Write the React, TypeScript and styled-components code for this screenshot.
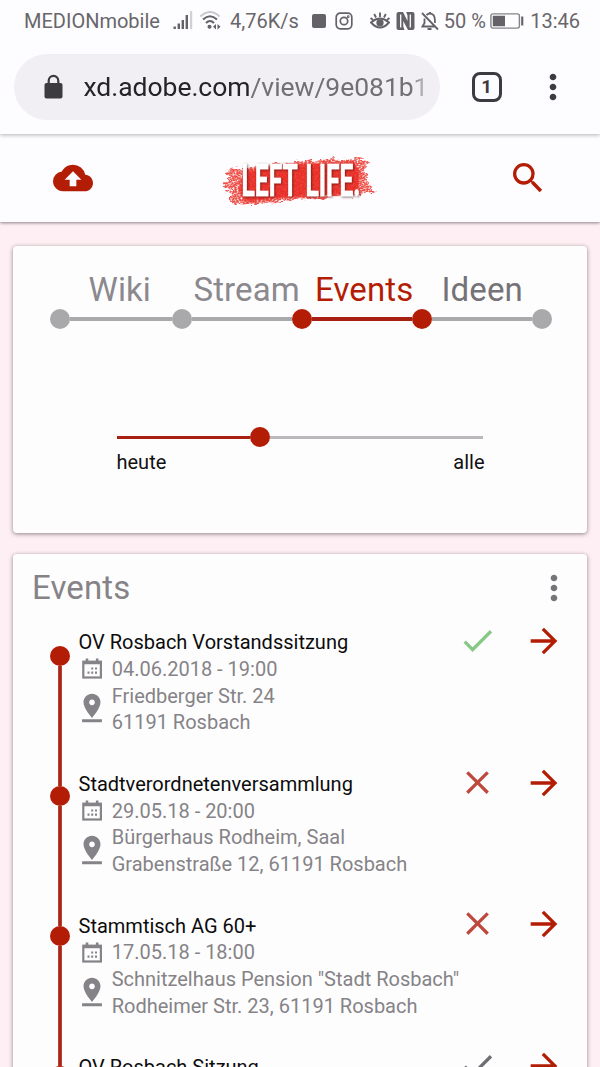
import React from "react";
import styled, { createGlobalStyle } from "styled-components";
import {
  MdArrowForward,
  MdCheck,
  MdClose,
  MdCloudUpload,
  MdMoreVert,
  MdPinDrop,
  MdSearch,
} from "react-icons/md";

const RED = "#b41d05";
const GREY = "#a9a8aa";

const GlobalStyle = createGlobalStyle`
  * { box-sizing: border-box; }
  html, body { margin: 0; padding: 0; overflow: hidden; }
  body { font-family: Roboto, sans-serif; background: #fdeff3; }
  svg { display: block; flex: none; }
`;

const Screen = styled.div`
  width: 600px;
  height: 1067px;
  overflow: hidden;
  display: flex;
  flex-direction: column;
  background: #fdeff3;
`;

/* ---------- system status bar ---------- */

const StatusBar = styled.div`
  flex: none;
  height: 41px;
  display: flex;
  align-items: center;
  padding-left: 24px;
  background: #fdfcfe;
  color: #68666a;
  z-index: 3;
`;

const StatusText = styled.span<{ $width: number }>`
  flex: none;
  width: ${(p) => p.$width}px;
  font-size: 20px;
  line-height: 24px;
  white-space: nowrap;
`;

const StatusIcon = styled.span<{ $width: number; $gap: number }>`
  flex: none;
  width: ${(p) => p.$width}px;
  margin-right: ${(p) => p.$gap}px;
`;

/* ---------- browser toolbar ---------- */

const BrowserBar = styled.div`
  flex: none;
  height: 93px;
  display: flex;
  align-items: center;
  padding: 0 0 2px 14px;
  background: #fdfcfe;
  box-shadow: 0 1px 4px rgba(0, 0, 0, 0.3);
  z-index: 2;
  color: #3c3b3f;
`;

const AddressPill = styled.div`
  width: 426px;
  height: 66px;
  border-radius: 33px;
  background: #f1eff4;
  display: flex;
  align-items: center;
  padding: 0 16px 0 30px;
`;

const Url = styled.div`
  flex: 1;
  margin-left: 20.5px;
  padding-top: 1px;
  overflow: hidden;
  white-space: nowrap;
  font-size: 26.5px;
  line-height: 34px;
  letter-spacing: -0.04px;
  color: #717074;
  mask-image: linear-gradient(to right, #000 96%, rgba(0, 0, 0, 0.4));
`;

const Domain = styled.span`
  color: #242327;
`;

const TabCount = styled.div`
  width: 30px;
  height: 30px;
  margin: 0 31.5px 0 31.5px;
  border: 3px solid #3c3b3f;
  border-radius: 8px;
  display: flex;
  align-items: center;
  justify-content: center;
  font-size: 18.5px;
  font-weight: 700;
  line-height: 24px;
`;

/* ---------- app header ---------- */

const AppHeader = styled.header`
  flex: none;
  height: 88px;
  display: flex;
  align-items: center;
  justify-content: space-between;
  padding: 0 52px 1px 53px;
  background: #fdfcfe;
  box-shadow: 0 1px 3px rgba(40, 20, 30, 0.5);
  z-index: 1;
  color: ${RED};
`;

const Main = styled.main`
  display: flex;
  flex-direction: column;
  gap: 21.5px;
  padding: 23.5px 13px 0;
`;

const Card = styled.section<{ $height: number }>`
  flex: none;
  height: ${(p) => p.$height}px;
  border-radius: 4px;
  background: #fefdfe;
  box-shadow: 0 1px 4px rgba(40, 20, 30, 0.5);
`;

/* ---------- category steps ---------- */

const StepLabels = styled.nav`
  display: flex;
  padding: 24px 0 0 75.5px;
  height: 63.5px;
`;

const StepLabel = styled.span<{ $width: number; $color: string }>`
  flex: none;
  width: ${(p) => p.$width}px;
  font-size: 33px;
  line-height: 40px;
  letter-spacing: 0.1px;
  white-space: nowrap;
  color: ${(p) => p.$color};
`;

const StepTrack = styled.div`
  display: flex;
  align-items: center;
  height: 20px;
  padding-left: 37px;
`;

const Dot = styled.span<{ $color: string }>`
  flex: none;
  width: 20px;
  height: 20px;
  border-radius: 50%;
  background: ${(p) => p.$color};
`;

const Segment = styled.span<{ $length: number; $color: string }>`
  flex: none;
  width: ${(p) => p.$length}px;
  height: 3.5px;
  background: ${(p) => p.$color};
`;

/* ---------- time range ---------- */

const Range = styled.div`
  width: 368px;
  margin: 98.3px 0 0 103.5px;
`;

const RangeTrack = styled.div`
  display: flex;
  align-items: center;
`;

const RangeLabels = styled.div`
  display: flex;
  justify-content: space-between;
  margin-top: 2.5px;
  font-size: 20px;
  line-height: 24px;
  color: #111;
`;

/* ---------- event list ---------- */

const ListHeader = styled.div`
  display: flex;
  align-items: center;
  justify-content: space-between;
  height: 67.2px;
  padding: 0 13.5px 0 19px;
  color: #757478;
`;

const ListTitle = styled.h2`
  margin: 0;
  padding-top: 1px;
  font-size: 33px;
  font-weight: 400;
  line-height: 40px;
  letter-spacing: 0.1px;
  color: #858387;
`;

const Timeline = styled.div`
  display: flex;
`;

const Rail = styled.div`
  flex: none;
  width: 28.5px;
  margin-left: 37px;
  padding-top: 24.5px;
  display: flex;
  flex-direction: column;
`;

const RailLine = styled.span`
  width: 4px;
  height: 120px;
  margin-left: 8px;
  background: linear-gradient(to right, #cf4536, #8f2216 50%, #cf4536);
`;

const Events = styled.ul`
  flex: 1;
  margin: 0;
  padding: 8.1px 24px 0 0;
  list-style: none;
`;

const EventRow = styled.li`
  display: flex;
  height: 141.7px;
`;

const EventText = styled.div`
  flex: 1;
  font-size: 20px;
  line-height: 26.7px;
  white-space: nowrap;
`;

const EventName = styled.div`
  color: #0c0c0d;
`;

const Meta = styled.div`
  display: flex;
  align-items: center;
  color: #858387;
`;

const MetaIcon = styled.span`
  flex: none;
  width: 33.2px;
`;

const PinIcon = styled(MdPinDrop)`
  margin: -2px 0 0 -4px;
`;

const Actions = styled.div`
  display: flex;
  gap: 27px;
  margin-top: -8.3px;
`;

const Action = styled.span<{ $color: string }>`
  width: 40px;
  height: 40px;
  margin-left: -1px;
  color: ${(p) => p.$color};
`;

const LockIcon = () => (
  <svg width="19" height="26" viewBox="0 0 19 26">
    <path d="M4.7 10V6.7a4.8 4.8 0 0 1 9.6 0V10" fill="none" stroke="#3c3b3f" strokeWidth="2.2" />
    <rect x="0.5" y="9" width="18" height="15.5" rx="2" fill="#3c3b3f" />
  </svg>
);

const CalendarIcon = () => (
  <svg width="33" height="22" viewBox="-3 0.5 33 22" fill="none">
    <rect x="1.3" y="4.2" width="17.6" height="15.8" stroke="#858387" strokeWidth="2.2" />
    <path d="M1 5.5H19.2M5 1v4M15.2 1v4" stroke="#858387" strokeWidth="2.6" />
    <path
      d="M9.2 11h2M13 11h2M5.5 15.2h2M9.2 15.2h2M13 15.2h2"
      stroke="#858387"
      strokeWidth="2.2"
    />
  </svg>
);

const Logo = () => (
  <svg width="160" height="60" viewBox="0 0 160 60">
    <defs>
      <filter id="brush" x="-5%" y="-10%" width="110%" height="120%">
        <feTurbulence type="fractalNoise" baseFrequency="0.12 0.3" numOctaves="3" seed="4" result="n" />
        <feDisplacementMap
          in="SourceGraphic"
          in2="n"
          scale="9"
          xChannelSelector="R"
          yChannelSelector="G"
          result="rough"
        />
        <feTurbulence type="fractalNoise" baseFrequency="0.5 0.6" numOctaves="2" seed="9" />
        <feColorMatrix values="0 0 0 0 0  0 0 0 0 0  0 0 0 0 0  -3 0 0 0 2.3" result="grain" />
        <feComposite in="rough" in2="grain" operator="in" />
        <feGaussianBlur stdDeviation="0.6" />
      </filter>
      <filter id="soft" x="-5%" y="-10%" width="110%" height="120%">
        <feGaussianBlur stdDeviation="1.2" />
      </filter>
      <filter id="letters" x="-5%" y="-10%" width="115%" height="130%">
        <feDropShadow dx="0.8" dy="0.8" stdDeviation="0.8" floodColor="#3a0503" floodOpacity="0.7" />
      </filter>
    </defs>
    <g filter="url(#brush)">
      <path
        d="M5 23 21 20 60 15 100 12 139 10 147 14 143 22 147 30 144 34 155 43 137 47 100 50 60 53 32 57 13 56 7 51 11 45 1 39 8 33Z"
        fill="#ee5149"
      />
    </g>
    <path
      d="M23 23 70 16 133 14 139 25 137 46 60 50 25 54 18 42Z"
      fill="#e92a22"
      opacity="0.85"
      filter="url(#soft)"
    />
    <text
      x="20.5"
      y="48"
      textLength="119"
      lengthAdjust="spacingAndGlyphs"
      filter="url(#letters)"
      fill="#fff"
      stroke="#fff"
      strokeWidth="0.4"
      fontFamily="Roboto, sans-serif"
      fontWeight="700"
      fontSize="45"
      wordSpacing="4"
    >
      LEFT LIFE.
    </text>
  </svg>
);

const SignalIcon = () => (
  <svg width="20" height="20" viewBox="0 0 20 20">
    <path d="M.5 15.5h2.4V18H.5zM4.6 12.5H7V18H4.6zM8.6 9H11v9H8.6zM12.6 4H15v14h-2.4z" fill="#646266" />
    <path d="M17 0h2.2v18H17z" fill="#d2d0d4" />
  </svg>
);

const WifiIcon = () => (
  <svg width="23" height="20" viewBox="1 0.5 23 20" fill="none">
    <path d="M1.5 6Q11 -3 20.5 6" stroke="#c9c7cb" strokeWidth="2" />
    <path d="M4 9Q11 2.5 18 9M7 12.5Q11 8.5 15 12.5" stroke="#646266" strokeWidth="2" />
    <circle cx="10.5" cy="16.3" r="2" fill="#646266" />
    <path d="M17 13.5V19l-3-2.7zM18.5 13.5V19l3-2.7z" fill="#646266" />
  </svg>
);

const EyeIcon = () => (
  <svg width="20" height="20" viewBox="0 0 20 20" fill="none" stroke="#646266" strokeWidth="1.9">
    <path d="M1 11.5Q10 3.5 19 11.5Q10 21.5 1 11.5ZM10 1.5V6M4.2 3 6 6.5M15.8 3 14 6.5M.5 7 3 9M19.5 7 17 9" />
    <circle cx="10" cy="11.8" r="2.7" fill="#646266" />
  </svg>
);

const NfcIcon = () => (
  <svg width="19" height="20" viewBox="0 0 19 20">
    <path
      d="M2.5 1H7l4.5 9V4.5L10.2 1H16.5q2 0 2 2v14q0 2-2 2H12L7.3 10v5.5L8.5 19H2.5q-2 0-2-2V3q0-2 2-2z"
      fill="#646266"
    />
    <path d="M4.7 3.5v13M14.3 3.5v13" stroke="#fdfcfe" strokeWidth="1.3" />
  </svg>
);

const BellOffIcon = () => (
  <svg width="18" height="20" viewBox="0 0 18 20" fill="none" stroke="#646266" strokeWidth="1.8">
    <path d="M3.5 7.5V12L1.5 15.5H14M5.5 4Q9 .8 12.5 4.2Q14 6 14 12M1 2 17 18.5M6.5 18h4M9 1v2" />
  </svg>
);

const InstagramIcon = () => (
  <svg width="18" height="18" viewBox="0 0 18 18" fill="none" stroke="#646266" strokeWidth="1.7">
    <rect x="1.2" y="1.2" width="15.6" height="15.6" rx="4" />
    <circle cx="9" cy="9" r="3.7" />
    <circle cx="13.2" cy="4.7" r=".5" />
  </svg>
);

const BatteryIcon = () => (
  <svg width="34" height="16" viewBox="0 0 34 16" fill="none">
    <rect x=".9" y=".9" width="28.5" height="14.2" rx="2" stroke="#858387" strokeWidth="1.4" />
    <path d="M2.8 2.7h12.2v10.6H2.8zM31.2 3.5h2.1v9h-2.1z" fill="#646266" />
  </svg>
);

type Answer = "yes" | "no" | "open";

const answerColor: Record<Answer, string> = {
  yes: "#86c886",
  no: "#be483b",
  open: "#6f6d71",
};

const events: { name: string; date: string; place: string[]; answer: Answer }[] = [
  {
    name: "OV Rosbach Vorstandssitzung",
    date: "04.06.2018 - 19:00",
    place: ["Friedberger Str. 24", "61191 Rosbach"],
    answer: "yes",
  },
  {
    name: "Stadtverordnetenversammlung",
    date: "29.05.18 - 20:00",
    place: ["Bürgerhaus Rodheim, Saal", "Grabenstraße 12, 61191 Rosbach"],
    answer: "no",
  },
  {
    name: "Stammtisch AG 60+",
    date: "17.05.18 - 18:00",
    place: ['Schnitzelhaus Pension "Stadt Rosbach"', "Rodheimer Str. 23, 61191 Rosbach"],
    answer: "no",
  },
  { name: "OV Rosbach Sitzung", date: "", place: [], answer: "open" },
];

export default function App() {
  return (
    <Screen>
      <GlobalStyle />
      <StatusBar>
        <StatusText $width={148.5}>MEDIONmobile</StatusText>
        <StatusIcon $width={20} $gap={7}><SignalIcon /></StatusIcon>
        <StatusIcon $width={23} $gap={7.5}><WifiIcon /></StatusIcon>
        <StatusText $width={82.3}>4,76K/s</StatusText>
        <StatusIcon $width={14} $gap={9}>
          <svg width="14" height="14"><rect width="14" height="14" rx="2" fill="#646266" /></svg>
        </StatusIcon>
        <StatusIcon $width={18} $gap={17}><InstagramIcon /></StatusIcon>
        <StatusIcon $width={20} $gap={6}><EyeIcon /></StatusIcon>
        <StatusIcon $width={19} $gap={6}><NfcIcon /></StatusIcon>
        <StatusIcon $width={18} $gap={4.5}><BellOffIcon /></StatusIcon>
        <StatusText $width={46.5}>50 %</StatusText>
        <StatusIcon $width={34} $gap={6}><BatteryIcon /></StatusIcon>
        <StatusText $width={52}>13:46</StatusText>
      </StatusBar>

      <BrowserBar>
        <AddressPill>
          <LockIcon />
          <Url><Domain>xd.adobe.com</Domain>/view/9e081b1</Url>
        </AddressPill>
        <TabCount>1</TabCount>
        <MdMoreVert size={40} />
      </BrowserBar>

      <AppHeader>
        <MdCloudUpload size={40} />
        <Logo />
        <MdSearch size={40} />
      </AppHeader>

      <Main>
        <Card $height={287}>
          <StepLabels>
            <StepLabel $width={105} $color="#8b898d">Wiki</StepLabel>
            <StepLabel $width={121.5} $color="#8b898d">Stream</StepLabel>
            <StepLabel $width={126.5} $color={RED}>Events</StepLabel>
            <StepLabel $width={90} $color="#757377">Ideen</StepLabel>
          </StepLabels>
          <StepTrack>
            <Dot $color={GREY} />
            <Segment $length={101.5} $color={GREY} />
            <Dot $color={GREY} />
            <Segment $length={100} $color={GREY} />
            <Dot $color={RED} />
            <Segment $length={100} $color="#a82012" />
            <Dot $color={RED} />
            <Segment $length={100} $color={GREY} />
            <Dot $color={GREY} />
          </StepTrack>
          <Range>
            <RangeTrack>
              <Segment $length={133.5} $color="#a82012" />
              <Dot $color={RED} />
              <Segment $length={213} $color="#bab8ba" />
            </RangeTrack>
            <RangeLabels>
              <span>heute</span>
              <span>alle</span>
            </RangeLabels>
          </Range>
        </Card>

        <Card $height={620}>
          <ListHeader>
            <ListTitle>Events</ListTitle>
            <MdMoreVert size={40} />
          </ListHeader>
          <Timeline>
            <Rail>
              {events.map((event) => (
                <React.Fragment key={event.name}>
                  <Dot $color={RED} />
                  <RailLine />
                </React.Fragment>
              ))}
            </Rail>
            <Events>
              {events.map((event) => (
                <EventRow key={event.name}>
                  <EventText>
                    <EventName>{event.name}</EventName>
                    {event.date && (
                      <Meta>
                        <MetaIcon><CalendarIcon /></MetaIcon>
                        {event.date}
                      </Meta>
                    )}
                    {event.place.length > 0 && (
                      <Meta>
                        <MetaIcon><PinIcon size={34} /></MetaIcon>
                        <div>
                          {event.place.map((line) => (
                            <div key={line}>{line}</div>
                          ))}
                        </div>
                      </Meta>
                    )}
                  </EventText>
                  <Actions>
                    <Action $color={answerColor[event.answer]}>
                      {event.answer === "no" ? <MdClose size={39} /> : <MdCheck size={39} />}
                    </Action>
                    <Action $color={RED}><MdArrowForward size={40} /></Action>
                  </Actions>
                </EventRow>
              ))}
            </Events>
          </Timeline>
        </Card>
      </Main>
    </Screen>
  );
}
